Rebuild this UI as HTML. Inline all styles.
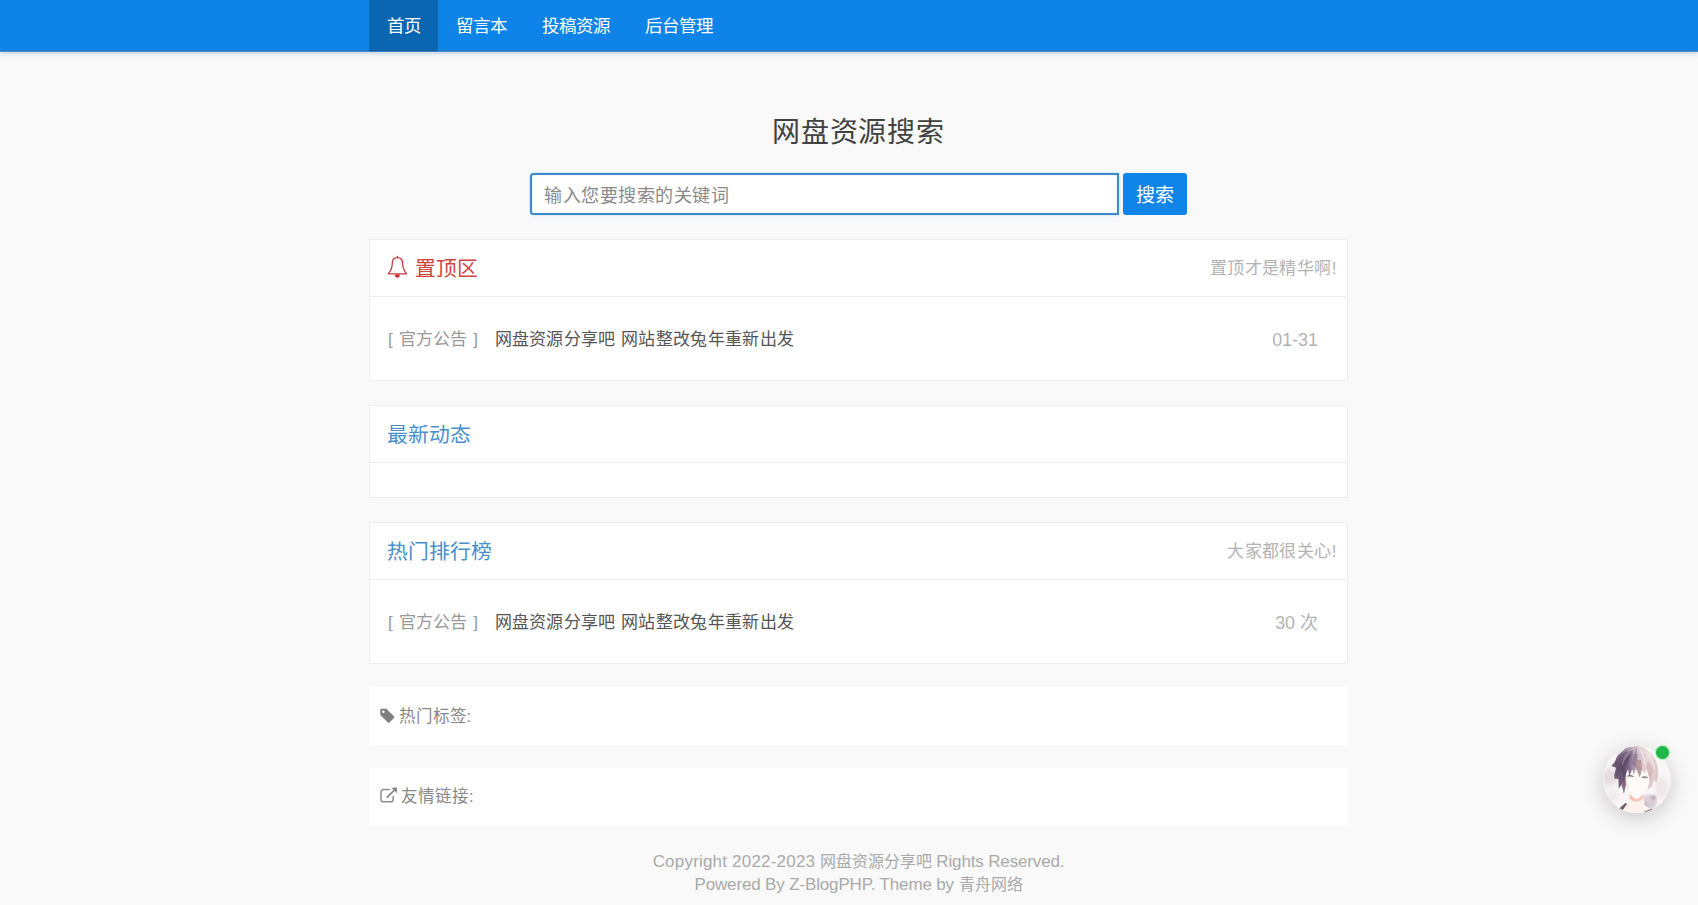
<!DOCTYPE html>
<html lang="zh-CN">
<head>
<meta charset="utf-8">
<title>网盘资源搜索</title>
<style>
*{box-sizing:border-box;margin:0;padding:0}
html,body{width:1698px;height:905px;overflow:hidden}
body{position:relative;background:#f9f9f9;font-family:"Liberation Sans",sans-serif;color:#555;font-size:17.6px}
a{text-decoration:none;color:inherit}
ul{list-style:none}

/* top navigation */
.nav{position:absolute;left:0;top:0;width:1698px;height:52px;background:#0e84e9;box-shadow:inset 0 -1px 0 #4a90d6,inset 0 -2px 0 #2679c8,0 1px 5px rgba(70,120,180,.38)}
.nav ul{position:absolute;left:369px;top:0;height:52px;white-space:nowrap;font-size:0}
.nav li{display:inline-block;vertical-align:top;height:52px;line-height:53px;font-size:17.5px;color:#fff;text-align:center;overflow:hidden}
.nav li.on{background:#0b66b1;box-shadow:inset 0 -1px 0 #3a7fc4,inset 0 -2px 0 #1c5f9f}
.nav li a{display:block;color:#fff}

/* search */
.hero{position:absolute;left:369px;top:106px;width:979px;text-align:center}
.hero h1{font-weight:normal;font-size:28px;letter-spacing:.7px;line-height:54.500px;height:50px;color:#424242;white-space:nowrap}
.sbox{position:absolute;left:161px;top:67px;width:589px;height:42px;border:2px solid #4188c8;border-radius:3.500px 0 0 3.500px;background:#fff;box-shadow:0 0 2.500px rgba(90,190,245,.6),inset 0 0 2px rgba(120,200,250,.45);overflow:hidden}
.sbox span{display:block;padding-left:12px;font-size:18px;letter-spacing:.55px;line-height:42px;color:#8a8a8a;text-align:left;white-space:nowrap}
.sbtn{position:absolute;left:754.300px;top:67.300px;width:63.700px;height:42px;border-radius:3px;background:#0f85e9;color:#fff;font-size:19px;line-height:46.500px;text-align:center;white-space:nowrap;overflow:hidden}

/* cards */
.card{position:absolute;left:369px;width:979px;background:#fff;border:1px solid #eee}
.card .hd{position:relative;height:57px;border-bottom:1px solid #eee;white-space:nowrap}
.card .hd h2{position:absolute;left:17px;top:0;font-weight:normal;font-size:20.8px;line-height:57px;color:#4890cd}
.card .hd h2.red{color:#d0453f}
.card .hd h2 svg{position:absolute;left:0;top:15.500px}
.card .hd h2.red span{padding-left:27.5px}
.card .hd em{position:absolute;right:10px;top:0;font-style:normal;font-size:17px;letter-spacing:.45px;line-height:57px;color:#b3b3b3}
.row{position:relative;height:44px;line-height:48px;margin:19.5px 0;white-space:nowrap;font-size:17px}
.row .cat{position:absolute;left:18px;top:0;color:#999;word-spacing:1.5px}
.row .tt{position:absolute;left:124.5px;top:0;color:#565656;letter-spacing:.33px}
.row .dt{position:absolute;right:29px;top:0;color:#b3b3b3;font-size:17.9px}

/* plain boxes */
.box{position:absolute;left:369px;width:979px;height:58.5px;background:#fff;white-space:nowrap;font-size:16.5px;line-height:58.5px;color:#888}
.box svg{position:absolute;left:11px}
.box span{position:absolute;top:0}

.foot{position:absolute;left:369px;top:849.500px;width:979px;text-align:center;font-size:17px;letter-spacing:-.15px;line-height:23px;color:#aaa;white-space:nowrap}
.foot b{font-weight:normal;font-size:16px;letter-spacing:0}
.foot i{font-style:normal;letter-spacing:.2px}

/* floating avatar */
.ava{position:absolute;left:1603px;top:745.8px;width:67.500px;height:67.500px;border-radius:50%;background:#f6f3f4;box-shadow:0 5px 22px rgba(0,0,0,.2);overflow:hidden}
.dot{position:absolute;left:1656px;top:745.8px;width:13.2px;height:13.2px;border-radius:50%;background:#22b74b;box-shadow:0 0 0 1px rgba(140,235,160,.7)}
</style>
</head>
<body>

<div class="nav">
  <ul>
    <li class="on" style="width:69px"><a>首页</a></li>
    <li style="width:86px"><a>留言本</a></li>
    <li style="width:103.5px"><a>投稿资源</a></li>
    <li style="width:103.5px"><a>后台管理</a></li>
  </ul>
</div>

<div class="hero">
  <h1>网盘资源搜索</h1>
  <div class="sbox"><span>输入您要搜索的关键词</span></div>
  <div class="sbtn">搜索</div>
</div>

<div class="card" style="top:238.5px;height:142px">
  <div class="hd">
    <h2 class="red"><svg width="21" height="24" viewBox="0 0 21 24"><path d="M10.400 1.300v1.300M10.400 2.600C7 2.600 5.300 4.900 5.300 8c0 3.200-.3 6.600-3.700 10.200v.7h17.700v-.7C15.900 14.600 15.600 11.200 15.600 8c0-3.100-1.800-5.400-5.200-5.400z" fill="none" stroke="#c9393b" stroke-width="1.250" stroke-linejoin="round" stroke-linecap="round"/><path d="M8 19.500a2.400 3.300 0 0 0 4.800 0z" fill="#d2282c"/></svg><span>置顶区</span></h2>
    <em>置顶才是精华啊!</em>
  </div>
  <div class="row"><span class="cat">[ 官方公告 ]</span><a class="tt">网盘资源分享吧 网站整改兔年重新出发</a><span class="dt">01-31</span></div>
</div>

<div class="card" style="top:404.5px;height:93.5px">
  <div class="hd"><h2>最新动态</h2></div>
</div>

<div class="card" style="top:521.5px;height:142px">
  <div class="hd"><h2>热门排行榜</h2><em>大家都很关心!</em></div>
  <div class="row"><span class="cat">[ 官方公告 ]</span><a class="tt">网盘资源分享吧 网站整改兔年重新出发</a><span class="dt">30 次</span></div>
</div>

<div class="box" style="top:686.5px">
  <svg width="16" height="16" viewBox="0 0 16 16" style="top:21px"><path d="M.3 1.300v5c0 .4.150.750.400 1l7.100 7.100c.5.500 1.200.500 1.700 0l4.400-4.400c.5-.5.500-1.200 0-1.700L6.800 1.200c-.250-.250-.6-.4-1-.4h-4.500c-.550 0-1 .250-1 .5zm3.100 3.700a1.250 1.250 0 1 1 0-2.500 1.250 1.250 0 0 1 0 2.500z" fill="#7f7f7f"/></svg>
  <span style="left:29.5px">热门标签:</span>
</div>

<div class="box" style="top:768px;height:57.500px;line-height:57.500px">
  <svg width="19" height="17" viewBox="0 0 19 17" style="top:19px"><path d="M9.200 2.500H3.600C2.200 2.500 1 3.700 1 5.100v7.100c0 1.400 1.200 2.600 2.600 2.600h7c1.400 0 2.600-1.200 2.600-2.600V9.500" fill="none" stroke="#8e8e8e" stroke-width="1.500" stroke-linecap="round"/><path d="M7.300 10.200L15 2.500" fill="none" stroke="#838383" stroke-width="1.700" stroke-linecap="round"/><path d="M11.600.8l5.300-.2v5.700z" fill="#838383"/></svg>
  <span style="left:32px">友情链接:</span>
</div>

<div class="foot"><i>Copyright 2022-2023</i> <b>网盘资源分享吧</b> Rights Reserved.<br>Powered By Z-BlogPHP. Theme by <b>青舟网络</b></div>

<div class="ava"><svg width="67.500" height="67.500" viewBox="0 0 67.500 67.500">
  <defs>
    <filter id="bl" x="-20%" y="-20%" width="140%" height="140%"><feGaussianBlur stdDeviation="0.550"/></filter>
    <filter id="bl2" x="-40%" y="-40%" width="180%" height="180%"><feGaussianBlur stdDeviation="2.400"/></filter>
    <filter id="bl3" x="-30%" y="-30%" width="160%" height="160%"><feGaussianBlur stdDeviation="1.100"/></filter>
    <linearGradient id="hg" x1="0" y1="0" x2="1" y2="0">
      <stop offset="0" stop-color="#66536e"/><stop offset=".22" stop-color="#74607b"/><stop offset=".4" stop-color="#a792a9"/><stop offset=".56" stop-color="#d3bec6"/><stop offset=".8" stop-color="#e8d8d9"/><stop offset="1" stop-color="#dcc2c1"/>
    </linearGradient>
    <linearGradient id="hv" x1="0" y1="0" x2="0" y2="1">
      <stop offset="0" stop-color="#ffffff" stop-opacity=".18"/><stop offset=".5" stop-color="#ffffff" stop-opacity="0"/><stop offset="1" stop-color="#9a6d72" stop-opacity=".35"/>
    </linearGradient>
    <clipPath id="cc"><circle cx="33.750" cy="33.750" r="33.750"/></clipPath>
  </defs>
  <g clip-path="url(#cc)">
    <rect width="68" height="68" fill="#f8f6f6"/>
    <g filter="url(#bl2)">
      <ellipse cx="7" cy="31" rx="8" ry="9" fill="#e6dbdf"/>
      <ellipse cx="9" cy="50" rx="7" ry="6" fill="#f0eaec"/>
      <ellipse cx="59" cy="42" rx="7" ry="11" fill="#efe7e9"/>
      <ellipse cx="20" cy="6" rx="8" ry="5" fill="#efe9ea"/>
    </g>
    <g filter="url(#bl3)">
      <ellipse cx="46" cy="56" rx="8" ry="7.500" fill="#dccdd6"/>
      <ellipse cx="50.500" cy="51.500" rx="2.600" ry="2.200" fill="#b7a6b4"/>
      <ellipse cx="42.500" cy="60" rx="3" ry="3.500" fill="#cbbac6"/>
    </g>
    <g filter="url(#bl)">
      <!-- neck and chest -->
      <path d="M27.400 46 L25.500 57 L18 62.500 L14 69 L52 69 L48 63 L41.500 59 L40 46 Z" fill="#fcf1ec"/>
      <path d="M27 47.500 Q30 52.500 33.900 53.200 Q38 52 40.200 47.500 L40.600 52 Q34 58.500 26.300 52.500 Z" fill="#f3c3b6"/>
      <!-- clothes -->
      <path d="M15 63.500 L22.700 56.800 L24 58 L19 65 L13 69 Z" fill="#6a6166"/>
      <path d="M41 65.700 L48.700 62.400 L52 69 L43 69 Z" fill="#81787d"/>
      <!-- back hair -->
      <path d="M23.700 1.400 L14.400 9.700 L11.600 16.200 L8.400 20 L13 21.800 L11.100 29.200 L11.600 32.900 L15.300 32.900 L15.800 42.700 L18.600 38.500 L20.900 47.800 L23.700 35.700 L22.300 27 L46.400 27 L45.900 35.700 L45 42.700 L48.700 40.400 L51 33.900 L53.800 36.700 L55 29.200 L54.800 21.800 L52.400 13.500 L47.800 7 L41.300 1.900 L33.900 -.5 Z" fill="url(#hg)"/>
      <path d="M23.700 1.400 L14.400 9.700 L11.600 16.200 L8.400 20 L13 21.800 L11.100 29.200 L11.600 32.900 L15.300 32.900 L15.800 42.700 L18.600 38.500 L20.900 47.800 L23.700 35.700 L22.300 27 L46.400 27 L45.900 35.700 L45 42.700 L48.700 40.400 L51 33.900 L53.800 36.700 L55 29.200 L54.800 21.800 L52.400 13.500 L47.800 7 L41.300 1.900 L33.900 -.5 Z" fill="url(#hv)"/>
      <!-- face -->
      <path d="M22 24 L22.700 36.700 Q23.500 41 25.500 44.100 Q29.500 50 33.900 52 Q38.800 49.800 43.200 43.600 Q45.300 40 45.900 35.700 L46.600 24 Z" fill="#fefaf7"/>
      <path d="M22.300 30 Q22.300 40 26 45 L24.500 37 Z" fill="#f3d3cb" opacity=".8"/>
      <!-- bangs -->
      <path d="M17 18 L20.500 35 L23.200 27.500 L25 22.500 L26.300 30.500 L29.500 22.700 L30.600 28.800 L33 21.500 L36.700 31.300 L39 23 L41.300 27.500 L43.500 22.500 L46 31 L48.200 35.500 L51 20 L42 8 L27 8 Z" fill="url(#hg)"/>
      <path d="M33 21.500 L36.700 31.300 L39 23 L38 14 L34 14 Z" fill="#b38d95" opacity=".8"/>
      <path d="M41.300 27.500 L43.500 22.500 L46 31 L48.200 35.500 L49.500 24 L45 15 Z" fill="#caa6a6" opacity=".55"/>
      <!-- dark accents -->
      <path d="M22 6 L14 13 L12 19 L14.500 21 L13 30 L16 31.500 L17 40 L20 34 L21 44 L23.500 31 L22 22 L27 12 L31 4 Z" fill="#513f5c" opacity=".42"/>
      <path d="M33.500 .5 L31 9 L29 18 L32.500 22 L34.500 12 Z" fill="#7d6a84" opacity=".55"/>
      <!-- highlights -->
      <path d="M27 5 Q21 11 19.500 19" stroke="#a898b0" stroke-width="1.100" fill="none" opacity=".7"/>
      <path d="M37 3 Q41 9 41.500 18" stroke="#f1e6e8" stroke-width="1.500" fill="none" opacity=".8"/>
      <path d="M44 6 Q50 13 51.500 24" stroke="#f4eaea" stroke-width="1.400" fill="none" opacity=".8"/>
      <path d="M30 6 Q27 13 27 20" stroke="#8c7a94" stroke-width="1" fill="none" opacity=".7"/>
    </g>
    <!-- eyes -->
    <path d="M24.600 30 Q27.300 28.700 30.200 30.300" stroke="#54434a" stroke-width=".9" fill="none" stroke-linecap="round"/>
    <path d="M39.200 31.200 Q41.700 30.100 44.300 31.400" stroke="#54434a" stroke-width=".9" fill="none" stroke-linecap="round"/>
    <ellipse cx="27.600" cy="30.800" rx="1.100" ry=".7" fill="#8b8576" opacity=".75"/>
    <ellipse cx="41.600" cy="31.900" rx="1.100" ry=".7" fill="#8b8576" opacity=".75"/>
  </g>
</svg></div>
<div class="dot"></div>

</body>
</html>
